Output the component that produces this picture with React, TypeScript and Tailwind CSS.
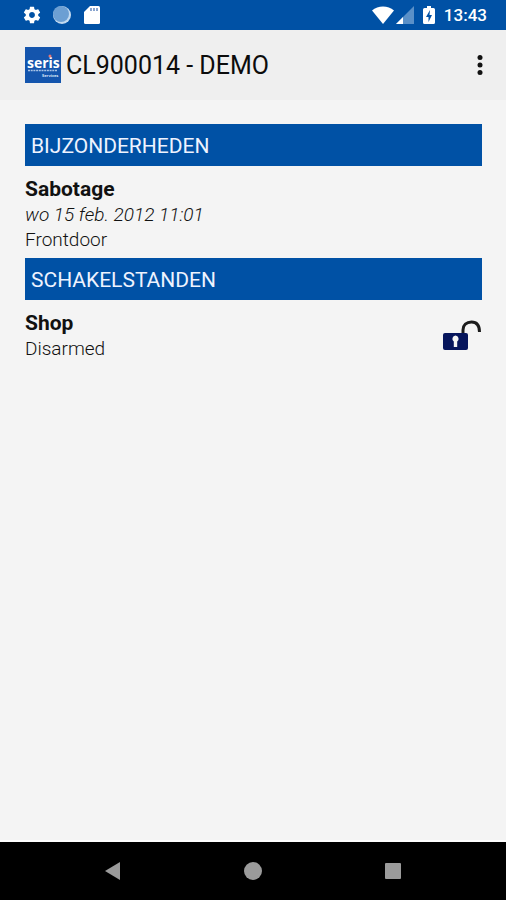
import type { ReactNode } from "react";

function StatusBar() {
  return (
    <div className="flex h-[30px] shrink-0 items-center justify-between bg-[#0051a5] pr-[19px] pl-[22px] text-white">
      <div className="flex items-center gap-[10px]">
        <svg viewBox="0 0 24 24" className="size-5" fill="currentColor">
          <path d="M19.43 12.98c.04-.32.07-.64.07-.98s-.03-.66-.07-.98l2.11-1.65c.19-.15.24-.42.12-.64l-2-3.46c-.12-.22-.39-.3-.61-.22l-2.49 1c-.52-.4-1.08-.73-1.69-.98l-.38-2.65A.488.488 0 0 0 14 2h-4c-.25 0-.46.18-.49.42l-.38 2.65c-.61.25-1.17.59-1.69.98l-2.49-1c-.23-.09-.49 0-.61.22l-2 3.46c-.13.22-.07.49.12.64l2.11 1.65c-.04.32-.07.65-.07.98s.03.66.07.98l-2.11 1.65c-.19.15-.24.42-.12.64l2 3.46c.12.22.39.3.61.22l2.49-1c.52.4 1.08.73 1.69.98l.38 2.65c.03.24.24.42.49.42h4c.25 0 .46-.18.49-.42l.38-2.65c.61-.25 1.17-.59 1.69-.98l2.49 1c.23.09.49 0 .61-.22l2-3.46c.12-.22.07-.49-.12-.64l-2.11-1.65zM12 15.5c-1.93 0-3.5-1.57-3.5-3.5s1.57-3.5 3.5-3.5 3.5 1.57 3.5 3.5-1.57 3.5-3.5 3.5z" />
        </svg>
        <svg viewBox="0 0 20 20" className="size-5">
          <circle cx="10" cy="10" r="9" fill="#c3daf0" />
          <circle cx="9" cy="9" r="8" fill="#6c9fd3" />
        </svg>
        <svg viewBox="0 0 20 20" className="size-5">
          <path d="M8 1h8.500A1.500 1.500 0 0 1 18 2.500v15a1.500 1.500 0 0 1-1.500 1.500h-13A1.500 1.500 0 0 1 2 17.500V7z" fill="#fff" />
          <path d="M8 3h2v3H8zM11 3h2v3h-2zM14 3h2v3h-2z" fill="#8aa5cf" />
        </svg>
      </div>
      <div className="flex items-center">
        <svg viewBox="0 0 22 18" className="h-[18px] w-[22px]" fill="currentColor">
          <path d="M11 18 0 4.500C3 2 7 .500 11 .500S19 2 22 4.500z" />
        </svg>
        <svg viewBox="0 0 18 18" className="ml-[2px] size-[18px]">
          <path d="M18 0v18H0z" fill="#5a90c8" />
          <path d="M7 11v7H0z" fill="#fff" />
        </svg>
        <svg viewBox="0 0 12 20" className="ml-[9px] h-5 w-3">
          <path d="M4 1h4v2h2.500A1.500 1.500 0 0 1 12 4.500v13a1.500 1.500 0 0 1-1.500 1.500h-9A1.500 1.500 0 0 1 0 17.500v-13A1.500 1.500 0 0 1 1.500 3H4z" fill="#fff" />
          <path d="M7 5 3 12h2.500v5L9 10H6.500z" fill="#0051a5" />
        </svg>
        <span className="ml-[9px] text-[17px] leading-5 font-medium">13:43</span>
      </div>
    </div>
  );
}

function Logo() {
  return (
    <svg viewBox="0 0 36 36" className="size-9 bg-[#1455ad]" role="img" aria-label="seris">
      <text x="2" y="21" fill="#fff" fontSize="14" fontWeight="700" fontFamily="Open Sans, sans-serif">
        seris
      </text>
      <circle cx="25" cy="9" r="1.500" fill="#e57373" />
      <path d="M3 23.500h29" stroke="#a9c4e6" strokeWidth="1.500" strokeDasharray="2 .7" />
      <text x="17" y="30" fill="#dbe7f7" fontSize="4" fontWeight="700" fontFamily="Open Sans, sans-serif">
        Services
      </text>
    </svg>
  );
}

function Toolbar({ title }: { title: string }) {
  return (
    <header className="flex h-[70px] shrink-0 items-center gap-[5px] bg-[#efefef] pr-[14px] pl-[25px]">
      <Logo />
      <h1 className="flex-1 pt-[2px] text-[25px] leading-8 text-[#0c0c0c]">{title}</h1>
      <button aria-label="Menu" className="flex h-10 w-6 items-center justify-center">
        <svg viewBox="0 0 6 20" className="h-5 w-[6px]" fill="#111">
          <circle cx="3" cy="2.500" r="2.500" />
          <circle cx="3" cy="10" r="2.500" />
          <circle cx="3" cy="17.500" r="2.500" />
        </svg>
      </button>
    </header>
  );
}

function Section({ title, children }: { title: string; children: ReactNode }) {
  return (
    <section className="pb-[6px]">
      <h2 className="bg-[#0051a5] px-[6px] pt-2 pb-[6px] text-[21px] leading-7 text-[#eef3ff]">{title}</h2>
      {children}
    </section>
  );
}

function OpenLock() {
  return (
    <svg viewBox="0 0 40 32" className="h-8 w-10" role="img" aria-label="Unlocked">
      <path d="M21 14V10C21 5 24.500 2 29.500 2S37.500 5.500 37.500 12" fill="none" stroke="#1c1c1c" strokeWidth="3" />
      <rect x="1" y="13" width="25" height="17" rx="2" fill="#06155c" />
      <path d="M13.500 15.500a3.300 3.300 0 0 1 1.700 6V27h-3.400v-5.500a3.300 3.300 0 0 1 1.700-6z" fill="#f4f4f4" />
    </svg>
  );
}

function NavBar() {
  return (
    <nav className="flex h-[58px] shrink-0 items-center justify-center gap-[116px] bg-black text-[#9b9b9b]">
      <button aria-label="Back" className="flex size-6 items-center justify-center">
        <svg viewBox="0 0 18 18" className="size-[18px]" fill="currentColor">
          <path d="M16 0v18L1 9z" />
        </svg>
      </button>
      <button aria-label="Home" className="flex size-6 items-center justify-center">
        <svg viewBox="0 0 18 18" className="size-[18px]" fill="currentColor">
          <circle cx="9" cy="9" r="9" />
        </svg>
      </button>
      <button aria-label="Overview" className="flex size-6 items-center justify-center">
        <svg viewBox="0 0 16 16" className="size-4" fill="currentColor">
          <rect width="16" height="16" rx="1" />
        </svg>
      </button>
    </nav>
  );
}

export default function App() {
  return (
    <div className="flex min-h-screen flex-col bg-[#f4f4f4] font-[Roboto,sans-serif] text-[#111]">
      <StatusBar />
      <Toolbar title="CL900014 - DEMO" />
      <main className="flex-1 px-6 pt-6 pl-[25px]">
        <Section title="BIJZONDERHEDEN">
          <div className="pt-[10px]">
            <h3 className="text-[21px] leading-[26px] font-bold">Sabotage</h3>
            <p className="text-[19px] leading-[25px] font-light italic">wo 15 feb. 2012 11:01</p>
            <p className="text-[19px] leading-[25px] font-light">Frontdoor</p>
          </div>
        </Section>
        <Section title="SCHAKELSTANDEN">
          <div className="flex items-center justify-between pt-[10px]">
            <div>
              <h3 className="text-[21px] leading-[26px] font-bold">Shop</h3>
              <p className="text-[19px] leading-[25px] font-light">Disarmed</p>
            </div>
            <OpenLock />
          </div>
        </Section>
      </main>
      <div className="h-[2px] bg-white" />
      <NavBar />
    </div>
  );
}
